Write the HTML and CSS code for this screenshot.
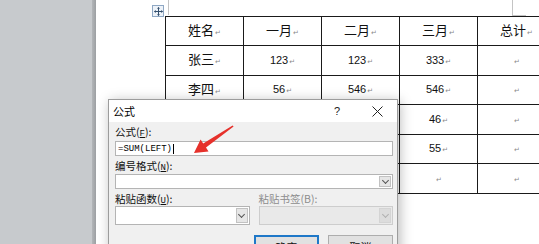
FILE: index.html
```html
<!DOCTYPE html>
<html lang="zh-CN">
<head>
  <meta charset="UTF-8" />
  <title>公式</title>
  <link rel="stylesheet" href="styles.css">
</head>
<body>
  <div class="desk"></div>
  <div class="desk-edge"></div>

  <div class="page">
    <span class="mark mark-left"></span>
    <span class="mark mark-right"></span>

    <div class="table-wrap">
      <span class="move-handle">
        <svg width="9" height="9" viewBox="0 0 9 9">
          <path d="M4.5 0.5 L4.5 8.5 M0.5 4.5 L8.5 4.5" stroke="#34506e" stroke-width="1" fill="none"/>
          <path d="M4.5 0 L3 1.8 L6 1.8 Z M4.5 9 L3 7.2 L6 7.2 Z M0 4.5 L1.8 3 L1.8 6 Z M9 4.5 L7.2 3 L7.2 6 Z" fill="#34506e"/>
        </svg>
      </span>
      <table class="grid">
        <tr>
          <td class="cn">姓名<i>↵</i></td>
          <td class="cn">一月<i>↵</i></td>
          <td class="cn">二月<i>↵</i></td>
          <td class="cn">三月<i>↵</i></td>
          <td class="cn">总计<i>↵</i></td>
        </tr>
        <tr>
          <td class="cn">张三<i>↵</i></td>
          <td>123<i>↵</i></td>
          <td>123<i>↵</i></td>
          <td>333<i>↵</i></td>
          <td><i>↵</i></td>
        </tr>
        <tr>
          <td class="cn">李四<i>↵</i></td>
          <td>56<i>↵</i></td>
          <td>546<i>↵</i></td>
          <td>546<i>↵</i></td>
          <td><i>↵</i></td>
        </tr>
        <tr>
          <td class="cn">王五<i>↵</i></td>
          <td>12<i>↵</i></td>
          <td>34<i>↵</i></td>
          <td>46<i>↵</i></td>
          <td><i>↵</i></td>
        </tr>
        <tr>
          <td class="cn">赵六<i>↵</i></td>
          <td>21<i>↵</i></td>
          <td>43<i>↵</i></td>
          <td>55<i>↵</i></td>
          <td><i>↵</i></td>
        </tr>
        <tr>
          <td><i>↵</i></td>
          <td><i>↵</i></td>
          <td><i>↵</i></td>
          <td><i>↵</i></td>
          <td><i>↵</i></td>
        </tr>
      </table>
    </div>
  </div>

  <div class="dialog">
    <div class="titlebar">
      <span class="title">公式</span>
      <span class="help">?</span>
      <span class="close">
        <svg width="11" height="11" viewBox="0 0 11 11">
          <path d="M0.5 0.5 L10.5 10.5 M10.5 0.5 L0.5 10.5" stroke="#222" stroke-width="1" fill="none"/>
        </svg>
      </span>
    </div>
    <div class="body">
      <div class="label">公式(<u>F</u>):</div>
      <div class="field formula">=SUM(LEFT)<span class="caret"></span></div>

      <div class="label">编号格式(<u>N</u>):</div>
      <div class="field combo">
        <span class="drop"><span class="chev"></span></span>
      </div>

      <div class="pair">
        <div>
          <div class="label">粘贴函数(<u>U</u>):</div>
          <div class="field select">
            <span class="drop"><span class="chev"></span></span>
          </div>
        </div>
        <div>
          <div class="label disabled">粘贴书签(B):</div>
          <div class="field select off">
            <span class="drop"><span class="chev"></span></span>
          </div>
        </div>
      </div>

      <div class="buttons">
        <button class="btn default">确定</button>
        <button class="btn">取消</button>
      </div>
    </div>
  </div>

  <svg class="arrow" width="56" height="40" viewBox="0 0 56 40">
    <polygon points="9,34 23.5,32.5 21,28.6 48.6,7.6 47.6,6.4 18.2,24.4 15.6,20.4" fill="#e6312b"/>
  </svg>
</body>
</html>
```

FILE: styles.css
```css
body {
  margin: 0;
  width: 539px;
  height: 244px;
  overflow: hidden;
  position: relative;
  display: flex;
  font-family: "Noto Sans CJK SC", "Liberation Sans", sans-serif;
  color: #000;
}

.desk {
  width: 92px;
  flex-shrink: 0;
  background-color: #c7cacd;
}

.desk-edge {
  width: 4px;
  flex-shrink: 0;
  background: linear-gradient(to right, #b3b6b9, #9c9fa2);
}

.page {
  flex: 1;
  min-width: 0;
  background-color: #fff;
  position: relative;
  overflow: hidden;
  padding: 16px 0 0 69px;
}

.mark {
  position: absolute;
  top: 0;
  width: 1px;
  height: 15px;
  background-color: #c4c4c4;
}

.mark-left {
  left: 72px;
}

.mark-right {
  left: 416px;
}

.mark-right::after {
  content: "";
  position: absolute;
  left: 0;
  top: 15px;
  width: 14px;
  height: 1px;
  background-color: #c4c4c4;
}

.table-wrap {
  position: relative;
  width: 391px;
}

.move-handle {
  position: absolute;
  left: -13px;
  top: -11px;
  width: 10px;
  height: 10px;
  border: 1px solid #8fa8c4;
  background-color: #eef3f9;
  display: flex;
  align-items: center;
  justify-content: center;
}

.grid {
  border-collapse: collapse;
  table-layout: fixed;
  width: 391px;
}

.grid td {
  width: 77px;
  height: 28px;
  padding: 0;
  border: 1px solid #1a1a1a;
  text-align: center;
  vertical-align: middle;
  font-family: "Liberation Sans", sans-serif;
  font-size: 11px;
  line-height: 14px;
  color: #111;
}

.grid tr:nth-child(even) td {
  height: 29px;
}

.grid td.cn {
  font-family: "Noto Sans CJK SC", sans-serif;
  font-size: 13px;
}

.grid td i {
  font-style: normal;
  font-family: "DejaVu Sans", sans-serif;
  font-size: 7px;
  color: #8a8a8a;
  margin-left: 1px;
}

/* dialog window */
.dialog {
  position: absolute;
  left: 108px;
  top: 99px;
  width: 288px;
  height: 160px;
  border: 1px solid #9c9c9c;
  background-color: #f0f0f0;
  box-shadow: 2px 2px 12px rgba(0, 0, 0, 0.28);
}

.titlebar {
  height: 22px;
  background-color: #fff;
  display: flex;
  align-items: center;
  padding-left: 4px;
  font-size: 11px;
}

.title {
  flex: 1;
}

.help {
  font-family: "Liberation Sans", sans-serif;
  font-size: 11px;
  color: #222;
  margin-right: 32px;
}

.close {
  display: flex;
  margin-right: 14px;
}

.body {
  padding: 3px 4px 0 6px;
}

.label {
  font-size: 10.5px;
  line-height: 14px;
  height: 14px;
  color: #111;
}

.label u {
  font-family: "Liberation Mono", monospace;
  font-size: 9px;
}

.label.disabled {
  color: #8d8d8d;
}

.field {
  height: 13px;
  border: 1px solid #b4b4b4;
  background-color: #fff;
  position: relative;
  display: flex;
  align-items: center;
}

.formula {
  margin: 2px 0 3px;
  padding-left: 2px;
  font-family: "Liberation Mono", monospace;
  font-size: 9px;
  color: #000;
}

.caret {
  width: 1px;
  height: 10px;
  background-color: #000;
  margin-left: 1px;
}

.combo {
  margin: 1px 0 3px;
  justify-content: flex-end;
}

.select {
  height: 17px;
  justify-content: flex-end;
}

.select.off {
  background-color: #e9e9e9;
  border-color: #cdcdcd;
}

.drop {
  width: 12px;
  height: calc(100% - 2px);
  margin-right: 1px;
  border: 1px solid #c2c2c2;
  background-color: #e6e6e6;
  display: flex;
  align-items: center;
  justify-content: center;
  box-sizing: border-box;
}

.combo .drop {
  height: 11px;
}

.chev {
  width: 4px;
  height: 4px;
  border-right: 1px solid #555;
  border-bottom: 1px solid #555;
  transform: translateY(-1px) rotate(45deg);
}

.off .drop {
  background-color: #dcdcdc;
  border-color: #d4d4d4;
}

.off .chev {
  border-color: #b0b0b0;
}

.pair {
  display: grid;
  grid-template-columns: 1fr 1fr;
  column-gap: 9px;
}

.buttons {
  display: flex;
  justify-content: flex-end;
  gap: 9px;
  margin-top: 10px;
}

.btn {
  width: 65px;
  height: 23px;
  border: 1px solid #adadad;
  background-color: #e1e1e1;
  font-family: "Noto Sans CJK SC", sans-serif;
  font-size: 11px;
  color: #111;
  padding: 0;
}

.btn.default {
  border: 2px solid #1f78c8;
}

.arrow {
  position: absolute;
  left: 185px;
  top: 119px;
}
```
